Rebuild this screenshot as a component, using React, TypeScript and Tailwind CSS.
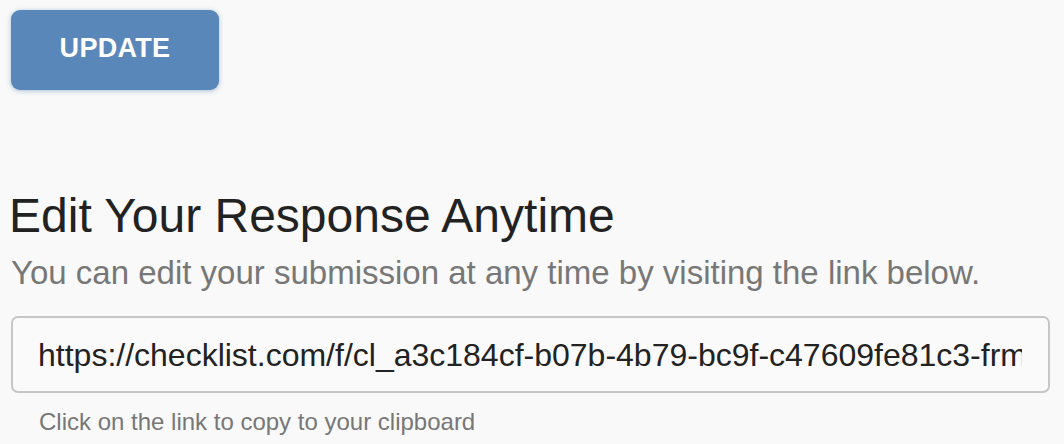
import React from 'react'

const App: React.FC = () => {
    return (
        <div className="min-h-screen w-[1064px] h-[444px] overflow-hidden bg-[#f9f9f9] font-['Liberation_Sans',Arial,sans-serif]">
            <div className="pl-[11px] pt-[10px]">
                <button className="w-[208px] h-[80px] pb-[4px] rounded-[9px] bg-[#5a87b9] text-white text-[27px] font-bold tracking-[0.3px] shadow-[0_1px_5px_rgba(90,135,185,0.5)]">
                    UPDATE
                </button>
            </div>

            <div className="pl-[11px] pr-[14px] mt-[98px]">
                <h2 className="-ml-[2px] text-[48px] leading-[56px] text-[#222]">Edit Your Response Anytime</h2>
                <p className="text-[33px] leading-[40px] text-[#777] mt-[9px]">
                    You can edit your submission at any time by visiting the link below.
                </p>
                <div className="mt-[23px] h-[77px] border-[2px] border-[#c6c6c6] rounded-[7px] bg-[#fafafa] flex items-center pl-[25px] pr-[26px] overflow-hidden">
                    <span className="text-[32px] text-[#222] whitespace-nowrap overflow-hidden">
                        https://checklist.com/f/cl_a3c184cf-b07b-4b79-bc9f-c47609fe81c3-frm
                    </span>
                </div>
                <p className="pl-[28px] mt-[15px] text-[24px] leading-[28px] text-[#777]">
                    Click on the link to copy to your clipboard
                </p>
            </div>
        </div>
    )
}

export default App
